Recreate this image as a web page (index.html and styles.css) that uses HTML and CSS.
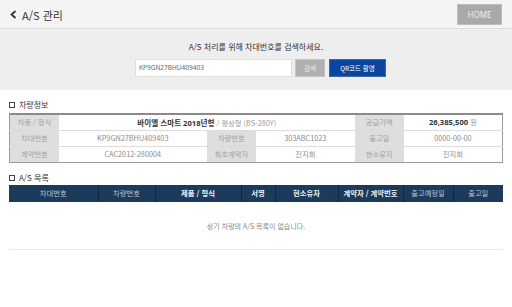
FILE: index.html
```html
<!DOCTYPE html>
<html lang="ko">
<head>
<meta charset="utf-8">
<link rel="stylesheet" href="styles.css">
</head>
<body>
<header class="topbar">
  <div class="title">
    <svg class="chev" width="7" height="9" viewBox="0 0 7 9"><polyline points="5.5,1 1.5,4.5 5.5,8" fill="none" stroke="#333" stroke-width="1.8"/></svg>
    <span>A/S 관리</span>
  </div>
  <button class="home">HOME</button>
</header>
<section class="search">
  <p class="guide">A/S 처리를 위해 차대번호를 검색하세요.</p>
  <div class="search-row">
    <div class="input">KP9GN27BHU409403</div>
    <button class="btn-search">검색</button>
    <button class="btn-qr">QR코드 촬영</button>
  </div>
</section>
<main class="content">
  <h2 class="sec-title"><span class="box"></span>차량정보</h2>
  <table class="info">
    <colgroup>
      <col class="c10"><col class="c30"><col class="c10"><col class="c20"><col class="c10"><col class="c20">
    </colgroup>
    <tr>
      <th>차종 / 형식</th>
      <td colspan="3"><b class="strong">바이엘 스마트 2018년형</b><span class="sub"> / 평상형 (BS-280Y)</span></td>
      <th>공급가액</th>
      <td><b class="strong">26,385,500</b> <span class="sub">원</span></td>
    </tr>
    <tr>
      <th>차대번호</th>
      <td>KP9GN27BHU409403</td>
      <th>차량번호</th>
      <td>303ABC1023</td>
      <th>출고일</th>
      <td>0000-00-00</td>
    </tr>
    <tr>
      <th>계약번호</th>
      <td>CAC2012-280004</td>
      <th>최초계약자</th>
      <td>진지희</td>
      <th>현소유자</th>
      <td>진지희</td>
    </tr>
  </table>
  <h2 class="sec-title second"><span class="box"></span>A/S 목록</h2>
  <table class="list">
    <colgroup>
      <col class="w89"><col class="w57"><col class="w86"><col class="w34"><col class="w63"><col class="w65"><col class="w50"><col class="w50">
    </colgroup>
    <tr>
      <th class="lt">차대번호</th>
      <th class="lt">차량번호</th>
      <th>제품 / 형식</th>
      <th>서명</th>
      <th>현소유자</th>
      <th>계약자 / 계약번호</th>
      <th class="lt">출고예정일</th>
      <th class="lt">출고일</th>
    </tr>
  </table>
  <div class="empty">상기 차량의 A/S 목록이 없습니다.</div>
</main>
</body>
</html>
```
FILE: styles.css
```css
* { box-sizing: border-box; }
html, body { margin: 0; padding: 0; background: #fff; }
body {
  width: 512px;
  font-family: "Noto Sans CJK KR", "Noto Sans", sans-serif;
  color: #333;
}
.topbar {
  height: 29px;
  background: #f4f4f4;
  border-bottom: 1px solid #dcdcdc;
  display: flex;
  align-items: center;
  justify-content: space-between;
  padding: 0 10px 0 10px;
}
.title {
  display: flex;
  align-items: center;
  gap: 5px;
  font-size: 11px;
  color: #333;
  margin-top: 1px;
}
.chev { display: block; }
.home {
  width: 45px;
  height: 21px;
  margin-top: 1px;
  background: #a9a9a9;
  border: 1px solid #bdbdbd;
  color: #eee;
  font-family: "Noto Sans", sans-serif;
  font-size: 8px;
  padding: 0;
}
.search {
  background: #eeeeee;
  height: 61px;
  padding-top: 12px;
}
.guide {
  margin: 0;
  text-align: center;
  font-size: 8px;
  line-height: 12px;
  color: #333;
}
.search-row {
  margin-top: 6px;
  display: flex;
  justify-content: center;
  padding-left: 9px;
  gap: 3px;
}
.input {
  width: 157px;
  height: 18px;
  background: #fff;
  border: 1px solid #dedede;
  font-family: "Noto Sans", sans-serif;
  font-size: 6.5px;
  line-height: 16px;
  color: #666;
  padding-left: 3px;
}
.btn-search, .btn-qr {
  height: 18px;
  padding: 0;
  font-family: "Noto Sans CJK KR", sans-serif;
  font-size: 6.5px;
}
.btn-search {
  width: 30px;
  background: #b0b0b0;
  border: 1px solid #c4c4c4;
  color: #eee;
}
.btn-qr {
  width: 57px;
  margin-left: 1px;
  background: #0a46a0;
  border: 1px solid #3b67ad;
  color: #fff;
}
.content {
  padding: 9px 9px 0 9px;
}
.sec-title {
  margin: 0 0 2px 0;
  font-size: 8px;
  line-height: 12px;
  font-weight: normal;
  color: #333;
  display: flex;
  align-items: center;
  gap: 4px;
}
.sec-title.second { margin-top: 9px; margin-bottom: 1px; }
.box {
  width: 6px;
  height: 6px;
  border: 1px solid #444;
  display: inline-block;
}
table { border-collapse: collapse; width: 494px; table-layout: fixed; }
.c10 { width: 10%; }
.c20 { width: 20%; }
.c30 { width: 30%; }
.info {
  border: 1px solid #9a9a9a;
  border-top: 2px solid #8a8a8a;
}
.info th, .info td {
  height: 16px;
  padding: 0;
  text-align: center;
  font-size: 7.3px;
  font-weight: normal;
  border-bottom: 1px solid #dcdcdc;
}
.info tr:last-child th, .info tr:last-child td { border-bottom: none; }
.info th {
  background: #dedede;
  color: #a2a2a2;
}
.info td {
  color: #8c8c8c;
  font-family: "Noto Sans CJK KR", "Noto Sans", sans-serif;
}
.info .strong { color: #333; font-weight: bold; font-family: "Noto Sans", "Noto Sans CJK KR", sans-serif; font-size: 7.6px; }
.info .sub { color: #9a9a9a; }
.w89 { width: 89px; } .w57 { width: 57px; } .w86 { width: 86px; } .w34 { width: 34px; }
.w63 { width: 63px; } .w65 { width: 65px; } .w50 { width: 50px; }
.list th {
  background: #1c3a5b;
  height: 17px;
  padding: 0;
  font-size: 7.3px;
  color: #f0f0f0;
  font-weight: bold;
  border-left: 1px solid #10263f;
}
.list th:first-child { border-left: none; }
.list th.lt { font-weight: normal; color: #b9c3cf; }
.empty {
  height: 48px;
  line-height: 48px;
  text-align: center;
  font-size: 7px;
  color: #888;
  border-bottom: 1px solid #e8e8e8;
}
```
